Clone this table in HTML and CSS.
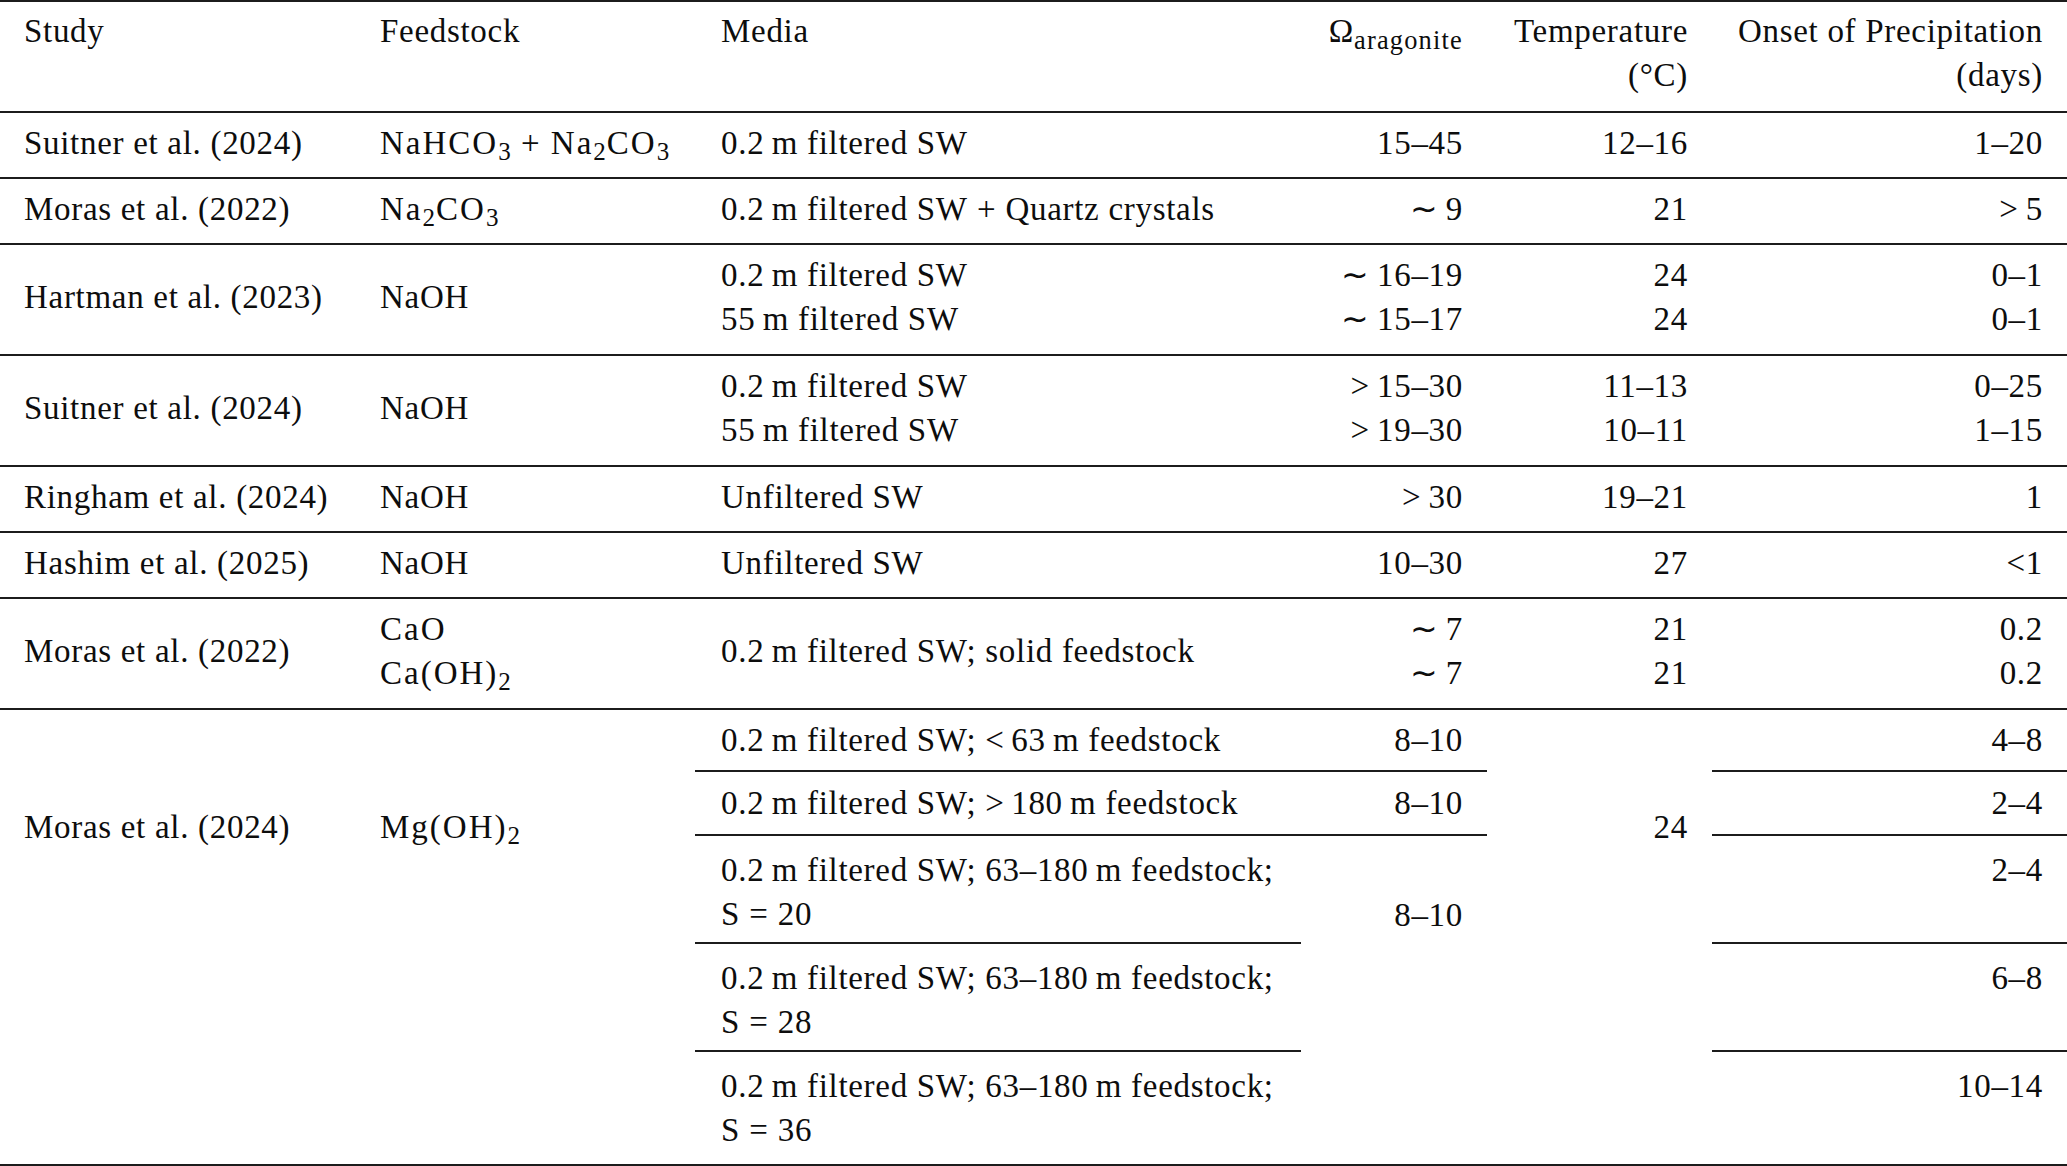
FILE: index.html
```html
<!DOCTYPE html>
<html lang="en">
<head>
<meta charset="utf-8">
<title>Table</title>
<link rel="stylesheet" href="styles.css">
</head>
<body>
<table class="tbl">
  <colgroup>
    <col class="c-study">
    <col class="c-feed">
    <col class="c-media">
    <col class="c-omega">
    <col class="c-temp">
    <col class="c-onset">
  </colgroup>
  <thead>
    <tr>
      <th class="l">Study</th>
      <th class="l">Feedstock</th>
      <th class="l m">Media</th>
      <th class="r">Ω<span class="sb hs">aragonite</span></th>
      <th class="r">Temperature<br>(°C)</th>
      <th class="r">Onset of Precipitation<br>(days)</th>
    </tr>
  </thead>
  <tbody>
    <tr class="row">
      <td class="l">Suitner et al. (2024)</td>
      <td class="l chem">NaHCO<span class="sb">3</span><span class="op">+</span>Na<span class="sb">2</span>CO<span class="sb">3</span></td>
      <td class="l m">0.2&#8201;m filtered SW</td>
      <td class="r">15–45</td>
      <td class="r">12–16</td>
      <td class="r">1–20</td>
    </tr>
    <tr class="row">
      <td class="l">Moras et al. (2022)</td>
      <td class="l chem">Na<span class="sb">2</span>CO<span class="sb">3</span></td>
      <td class="l m">0.2&#8201;m filtered SW<span class="op">+</span>Quartz crystals</td>
      <td class="r">∼&#8201;9</td>
      <td class="r">21</td>
      <td class="r">&gt;&#8201;5</td>
    </tr>
    <tr class="row dbl">
      <td class="l">Hartman et al. (2023)</td>
      <td class="l">NaOH</td>
      <td class="l m">0.2&#8201;m filtered SW<br>55&#8201;m filtered SW</td>
      <td class="r">∼&#8201;16–19<br>∼&#8201;15–17</td>
      <td class="r">24<br>24</td>
      <td class="r">0–1<br>0–1</td>
    </tr>
    <tr class="row dbl">
      <td class="l">Suitner et al. (2024)</td>
      <td class="l">NaOH</td>
      <td class="l m">0.2&#8201;m filtered SW<br>55&#8201;m filtered SW</td>
      <td class="r">&gt;&#8201;15–30<br>&gt;&#8201;19–30</td>
      <td class="r">11–13<br>10–11</td>
      <td class="r">0–25<br>1–15</td>
    </tr>
    <tr class="row">
      <td class="l">Ringham et al. (2024)</td>
      <td class="l">NaOH</td>
      <td class="l m">Unfiltered SW</td>
      <td class="r">&gt;&#8201;30</td>
      <td class="r">19–21</td>
      <td class="r">1</td>
    </tr>
    <tr class="row">
      <td class="l">Hashim et al. (2025)</td>
      <td class="l">NaOH</td>
      <td class="l m">Unfiltered SW</td>
      <td class="r">10–30</td>
      <td class="r">27</td>
      <td class="r">&lt;1</td>
    </tr>
    <tr class="row dbl">
      <td class="l">Moras et al. (2022)</td>
      <td class="l chem">CaO<br>Ca(OH)<span class="sb">2</span></td>
      <td class="l m">0.2&#8201;m filtered SW; solid feedstock</td>
      <td class="r">∼&#8201;7<br>∼&#8201;7</td>
      <td class="r">21<br>21</td>
      <td class="r">0.2<br>0.2</td>
    </tr>
    <tr class="subA">
      <td class="l nb" rowspan="3">Moras et al. (2024)</td>
      <td class="l nb chem" rowspan="3">Mg(OH)<span class="sb">2</span></td>
      <td class="l m bb">0.2&#8201;m filtered SW; <span class="rel">&lt;</span>63&#8201;m feedstock</td>
      <td class="r bb">8–10</td>
      <td class="r nb" rowspan="3">24</td>
      <td class="r bb">4–8</td>
    </tr>
    <tr class="subB">
      <td class="l m bb">0.2&#8201;m filtered SW; <span class="rel">&gt;</span>180&#8201;m feedstock</td>
      <td class="r bb">8–10</td>
      <td class="r bb">2–4</td>
    </tr>
    <tr class="sub2">
      <td class="l m bb">0.2&#8201;m filtered SW; 63–180&#8201;m feedstock;<br>S<span class="op">=</span>20</td>
      <td class="r nb bot">8–10</td>
      <td class="r bb top">2–4</td>
    </tr>
    <tr class="sub2">
      <td class="l bb" rowspan="2"></td>
      <td class="l bb" rowspan="2"></td>
      <td class="l m bb">0.2&#8201;m filtered SW; 63–180&#8201;m feedstock;<br>S<span class="op">=</span>28</td>
      <td class="r bb" rowspan="2"></td>
      <td class="r bb" rowspan="2"></td>
      <td class="r bb top">6–8</td>
    </tr>
    <tr class="sub2 last">
      <td class="l m bb">0.2&#8201;m filtered SW; 63–180&#8201;m feedstock;<br>S<span class="op">=</span>36</td>
      <td class="r bb top">10–14</td>
    </tr>
  </tbody>
</table>
</body>
</html>
```
FILE: styles.css
```css
html, body {
  margin: 0;
  padding: 0;
  background: #ffffff;
}

.tbl {
  width: 2067px;
  table-layout: fixed;
  border-collapse: collapse;
  font-family: "Liberation Serif", "Times New Roman", serif;
  font-size: 33px;
  letter-spacing: 0.7px;
  line-height: 44px;
  color: #0d0d0d;
  border-top: 2px solid #1c1c1c;
}

.c-study { width: 356px; }
.c-feed { width: 339px; }
.c-media { width: 606px; }
.c-omega { width: 186px; }
.c-temp { width: 225px; }
.c-onset { width: 355px; }

.tbl th,
.tbl td {
  padding: 8px 24px 12px;
  white-space: nowrap;
  font-weight: normal;
  vertical-align: middle;
}

.tbl .m {
  padding-left: 26px;
}

.tbl th {
  vertical-align: top;
  padding-top: 7px;
  padding-bottom: 14px;
  border-bottom: 2px solid #1c1c1c;
}

.l { text-align: left; }
.r { text-align: right; }

.row td {
  border-bottom: 2px solid #1c1c1c;
}

.tbl .dbl td {
  padding-bottom: 13px;
}

.tbl .subA td {
  padding-top: 8px;
  padding-bottom: 8px;
}

.tbl .subB td {
  padding-top: 9px;
  padding-bottom: 9px;
}

.tbl .sub2 td {
  padding-top: 12px;
  padding-bottom: 6px;
}

.tbl .last td {
  padding-bottom: 12px;
}

.bb { border-bottom: 2px solid #1c1c1c; }

.tbl td.top { vertical-align: top; }
.tbl td.bot { vertical-align: bottom; }

.chem {
  letter-spacing: 2px;
}

.sb {
  font-size: 0.76em;
  line-height: 0;
  vertical-align: -0.24em;
  letter-spacing: 1px;
}

.sb.hs {
  font-size: 0.8em;
  letter-spacing: 1.2px;
  vertical-align: -0.26em;
}

.op {
  padding: 0 0.28em;
}

.rel {
  padding-right: 0.2em;
}
```
